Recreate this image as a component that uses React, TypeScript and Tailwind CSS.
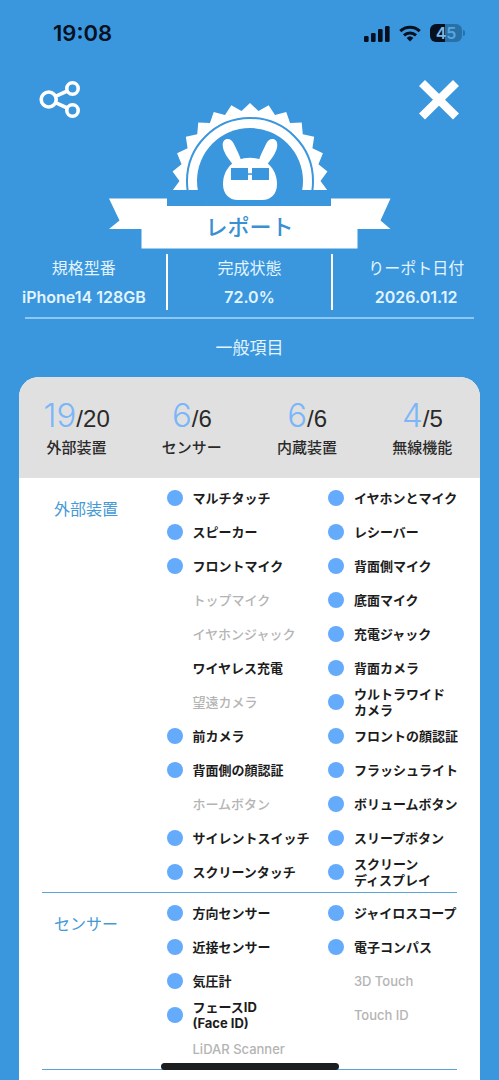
import { clsx } from 'clsx'

type Item = {
  name: string
  detail?: string
  state?: 'ok' | 'plain' | 'none'
}

const summary = [
  { passed: 19, total: 20, label: '外部装置' },
  { passed: 6, total: 6, label: 'センサー' },
  { passed: 6, total: 6, label: '内蔵装置' },
  { passed: 4, total: 5, label: '無線機能' },
]

const info = [
  { label: '規格型番', value: 'iPhone14 128GB' },
  { label: '完成状態', value: '72.0%' },
  { label: 'りーポト日付', value: '2026.01.12' },
]

const external: Item[] = [
  { name: 'マルチタッチ' },
  { name: 'イヤホンとマイク' },
  { name: 'スピーカー' },
  { name: 'レシーバー' },
  { name: 'フロントマイク' },
  { name: '背面側マイク' },
  { name: 'トップマイク', state: 'none' },
  { name: '底面マイク' },
  { name: 'イヤホンジャック', state: 'none' },
  { name: '充電ジャック' },
  { name: 'ワイヤレス充電', state: 'plain' },
  { name: '背面カメラ' },
  { name: '望遠カメラ', state: 'none' },
  { name: 'ウルトラワイド', detail: 'カメラ' },
  { name: '前カメラ' },
  { name: 'フロントの顔認証' },
  { name: '背面側の顔認証' },
  { name: 'フラッシュライト' },
  { name: 'ホームボタン', state: 'none' },
  { name: 'ボリュームボタン' },
  { name: 'サイレントスイッチ' },
  { name: 'スリープボタン' },
  { name: 'スクリーンタッチ' },
  { name: 'スクリーン', detail: 'ディスプレイ' },
]

const sensors: Item[] = [
  { name: '方向センサー' },
  { name: 'ジャイロスコープ' },
  { name: '近接センサー' },
  { name: '電子コンパス' },
  { name: '気圧計' },
  { name: '3D Touch', state: 'none' },
  { name: 'フェースID', detail: '(Face ID)' },
  { name: 'Touch ID', state: 'none' },
  { name: 'LiDAR Scanner', state: 'none' },
]

const TEETH = 26

// outline of the seal, tips and valleys alternate around the centre
const sealPoints = Array.from({ length: TEETH * 2 }, (_, i) => {
  const angle = (Math.PI * i) / TEETH
  const radius = i % 2 === 0 ? 78 : 70.5
  return `${(141 + radius * Math.sin(angle)).toFixed(2)},${(81 - radius * Math.cos(angle)).toFixed(2)}`
}).join(' ')

function StatusBar() {
  return (
    <div className="flex h-[66px] items-center justify-between pl-[53px] pr-[34px] text-[#06101f]">
      <span className="font-['Inter',sans-serif] text-[22px] font-semibold">19:08</span>
      <div className="flex items-center gap-[9px]">
        {/* signal */}
        <svg width="26" height="17" viewBox="0 0 26 17" fill="currentColor">
          <rect x="0" y="11" width="4.6" height="6" rx="1.3" />
          <rect x="7" y="8" width="4.6" height="9" rx="1.3" />
          <rect x="14" y="4" width="4.6" height="13" rx="1.3" />
          <rect x="21" y="1" width="4.6" height="16" rx="1.3" />
        </svg>

        {/* wifi */}
        <svg width="22" height="17" viewBox="0 0 22 17" fill="none" stroke="currentColor" strokeWidth="3">
          <path d="M1.3 6.2a14 14 0 0 1 19.4 0" />
          <path d="M5 10.3a8.8 8.8 0 0 1 12 0" />
          <path d="M11 16.4l-3.3-3.5a4.8 4.8 0 0 1 6.6 0z" fill="currentColor" stroke="none" />
        </svg>

        {/* battery */}
        <div className="flex items-center gap-px">
          <div className="flex h-[18px] w-8 items-center justify-center rounded-[6px] bg-linear-to-r from-[#06101f] from-48% to-[#2870a8] to-48% font-['Inter',sans-serif] text-base font-semibold leading-none">
            <span className="text-[#7fb9e6]">4</span>
            <span className="text-[#59a5df]">5</span>
          </div>
          <div className="h-[6px] w-[2px] rounded-r-full bg-[#2870a8]" />
        </div>
      </div>
    </div>
  )
}

function Badge() {
  return (
    <div className="relative mx-auto h-[146px] w-[282px]">
      <svg className="absolute inset-0" width="282" height="149" viewBox="0 0 282 149">
        <defs>
          <clipPath id="upper">
            <rect width="282" height="90" />
          </clipPath>
        </defs>

        <g clipPath="url(#upper)">
          <polygon points={sealPoints} fill="#fff" />
          <circle cx="141" cy="81" r="63" fill="none" stroke="#3a96dd" strokeWidth="2" />
        </g>
        <circle cx="141" cy="81" r="53" fill="#3a96dd" />

        {/* rabbit */}
        <g fill="#fff">
          <path d="M124.500 65c-6-7-10.800-14-10.800-20 0-3.500 1.800-6 4.800-6 3.200 0 5.200 2 6.700 5.500 2.500 5.500 5.300 10 7.300 17z" />
          <path d="M157.500 65c6-7 10.800-14 10.800-20 0-3.500-1.800-6-4.800-6-3.200 0-5.200 2-6.700 5.500-2.500 5.500-5.300 10-7.300 17z" />
          <path d="M141 57.700c17 0 27 12 27 26.300 0 10-6 16-15 16h-24c-9 0-15-6-15-16 0-14.300 10-26.300 27-26.300z" />
        </g>
        <g fill="#3a96dd">
          <rect x="122" y="68" width="17" height="12" />
          <rect x="143" y="68" width="17" height="12" />
          <rect x="139" y="73.300" width="4" height="1.5" />
        </g>

        {/* ribbon */}
        <polygon
          fill="#fff"
          points="0,98.5 58,98.5 58,106 222,106 222,98.500 281.500,98.500 271.500,120.500 281.500,129 248.500,129 248.500,148.500 32.500,148.500 32.500,129 0,129 10.500,120.500"
        />
      </svg>
      <h1 className="absolute inset-x-0 top-[111px] text-center text-[22px] font-medium leading-8 text-[#3a90d2]">
        レポート
      </h1>
    </div>
  )
}

function Section({ title, items }: { title: string; items: Item[] }) {
  return (
    <section className="mx-[23px] grid grid-cols-[30%_1fr] border-b border-[#5ba3d6] py-[3px]">
      <h2 className="pl-3 pt-4 text-base leading-6 text-[#4599d6]">{title}</h2>
      <ul className="grid auto-rows-[minmax(34px,1fr)] grid-cols-[5fr_4fr]">
        {items.map((item) => (
          <li key={item.name} className="flex min-w-0 items-center gap-[10px]">
            <span
              className={clsx('size-4 shrink-0 rounded-full', !item.state && 'bg-[#64abfc]')}
            />
            <span
              className={clsx(
                'whitespace-nowrap text-[13px] leading-4',
                item.state === 'none' ? 'font-medium text-[#b4b4b4]' : 'font-bold text-[#1c1c1c]',
              )}
            >
              {item.name}
              {item.detail && <span className="block">{item.detail}</span>}
            </span>
          </li>
        ))}
      </ul>
    </section>
  )
}

export default function App() {
  return (
    <div className="flex min-h-screen flex-col bg-[#3a96dd] font-['Inter','Noto_Sans_CJK_JP',sans-serif]" lang="ja">
      <StatusBar />

      <header className="flex justify-between px-[39px] pt-3">
        <button type="button" aria-label="共有" className="size-11">
          <svg width="42" height="44" viewBox="0 0 42 44" fill="none" stroke="#fff" strokeWidth="3.6">
            <circle cx="9.700" cy="21.500" r="7.500" />
            <circle cx="33.500" cy="10.500" r="5.700" />
            <circle cx="33.500" cy="32.500" r="5.700" />
            <path d="M16.500 18.300l11.800-5.300M16.500 24.700l11.800 5.300" />
          </svg>
        </button>
        <button type="button" aria-label="閉じる" className="size-11">
          <svg width="44" height="44" viewBox="0 0 44 44" stroke="#fff" strokeWidth="8.500">
            <path d="M6 5l34 33.500M40 5L6 38.500" />
          </svg>
        </button>
      </header>

      <main className="-mt-[22px] flex flex-1 flex-col">
        <Badge />

        <dl className="mt-2 grid grid-cols-3 divide-x-2 divide-white pl-[2px] text-center text-[#e2f4ff]">
          {info.map((entry) => (
            <div key={entry.label} className="h-14">
              <dt className="text-base leading-7">{entry.label}</dt>
              <dd className="whitespace-nowrap font-['Inter',sans-serif] text-base font-semibold leading-[30px]">
                {entry.value}
              </dd>
            </div>
          ))}
        </dl>
        <hr className="mx-[25px] mt-[7px] border-t-2 border-[#8cc8f3]" />
        <h2 className="py-[17px] text-center text-[17px] leading-6 text-[#e2f4ff]">一般項目</h2>

        <div className="mx-[19px] flex flex-1 flex-col overflow-hidden rounded-t-[20px] bg-white pb-3">
          <div className="grid grid-cols-4 bg-[#e0e0e0] pb-5 pt-[18px] text-center text-[#2a2a2a]">
            {summary.map((entry) => (
              <div key={entry.label}>
                <p className="flex h-[43px] items-baseline justify-center font-['Liberation_Sans',sans-serif] text-2xl leading-10">
                  <span className="font-['Inter',sans-serif] text-[33px] font-light text-[#7bb6f8]">
                    {entry.passed}
                  </span>
                  <span>/{entry.total}</span>
                </p>
                <p className="text-[15px] font-medium leading-5">{entry.label}</p>
              </div>
            ))}
          </div>

          <Section title="外部装置" items={external} />
          <Section title="センサー" items={sensors} />
        </div>
      </main>

      {/* home indicator */}
      <div className="fixed bottom-[10px] left-1/2 h-[7px] w-[178px] -translate-x-1/2 rounded-full bg-[#1b1e21]" />
    </div>
  )
}
